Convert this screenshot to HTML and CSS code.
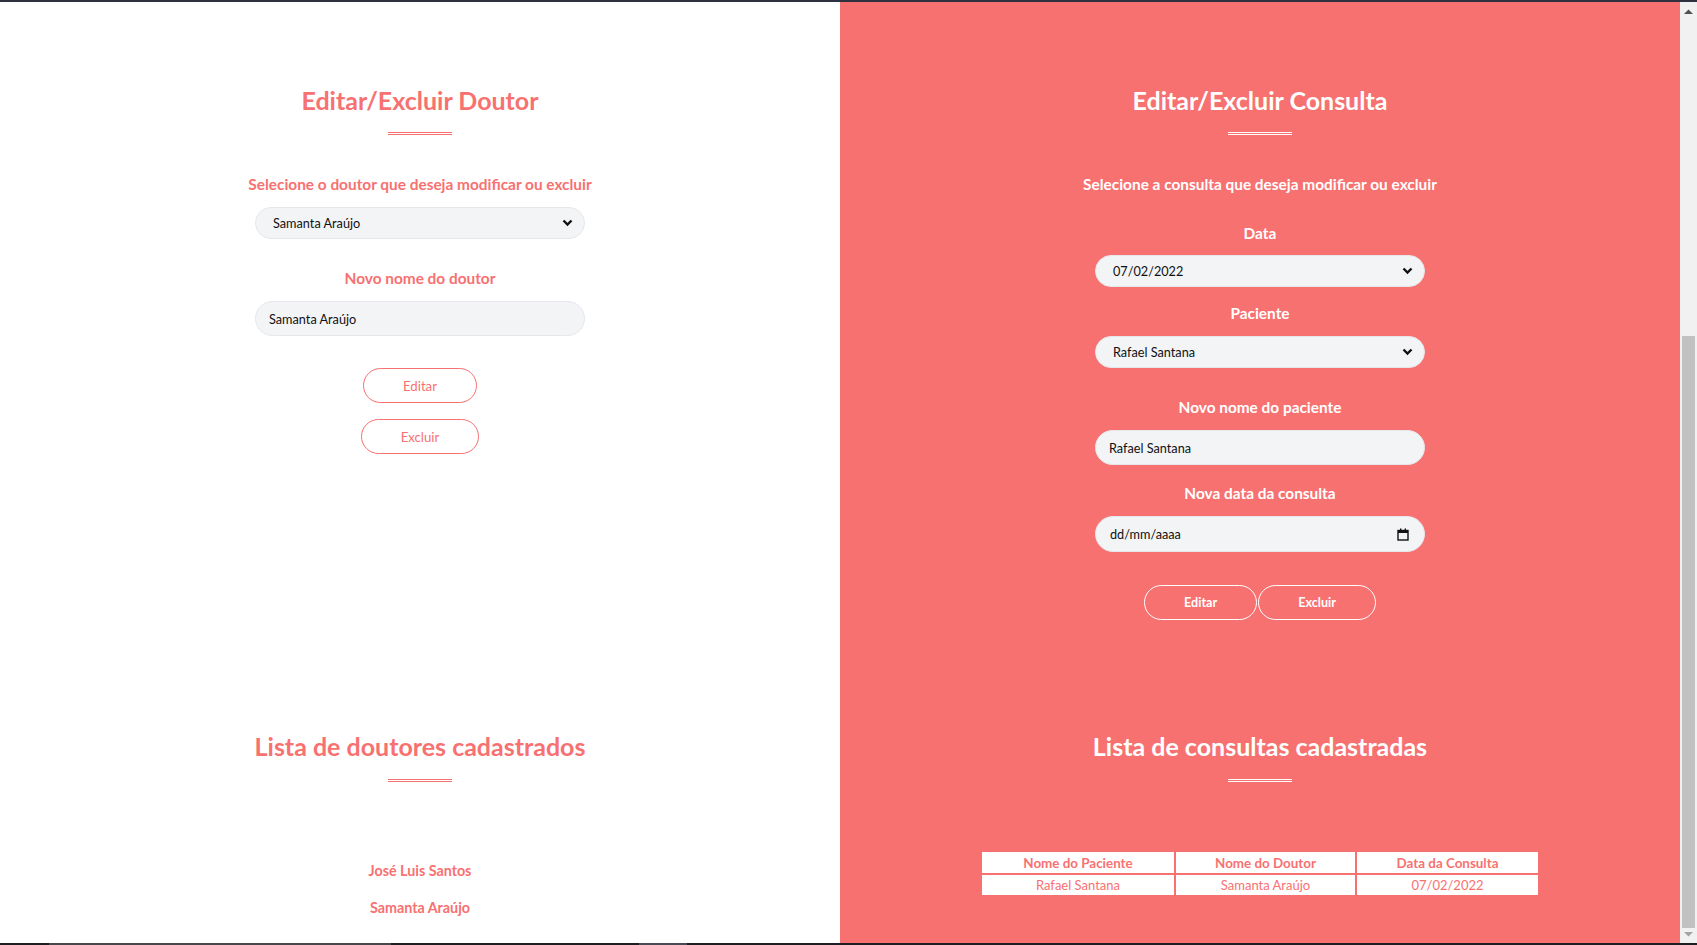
FILE: index.html
```html
<!DOCTYPE html>
<html lang="pt-BR">
<head>
<meta charset="utf-8">
<title>Editar/Excluir</title>
<link rel="stylesheet" href="styles.css">
</head>
<body>
<div class="topline"></div>
<div class="frame">
  <main class="page">
    <section class="col col-left">
      <div class="form-block">
        <h2 class="title">Editar/Excluir Doutor</h2>
        <div class="bar"></div>
        <p class="label lead">Selecione o doutor que deseja modificar ou excluir</p>
        <div class="select sel-doc"><span>Samanta Araújo</span>
          <svg class="chev" width="11" height="8" viewBox="0 0 11 8"><path d="M1.5 1.5 L5.5 5.5 L9.5 1.5" fill="none" stroke="#111" stroke-width="2.4"/></svg>
        </div>
        <p class="label l-doc">Novo nome do doutor</p>
        <input class="field" type="text" value="Samanta Araújo">
        <div class="btn-stack">
          <button class="btn">Editar</button>
          <button class="btn btn-2">Excluir</button>
        </div>
      </div>
      <div class="list-block">
        <h2 class="title">Lista de doutores cadastrados</h2>
        <div class="bar"></div>
        <ul class="names">
          <li>José Luis Santos</li>
          <li>Samanta Araújo</li>
        </ul>
      </div>
    </section>
    <section class="col col-right">
      <div class="form-block">
        <h2 class="title">Editar/Excluir Consulta</h2>
        <div class="bar"></div>
        <p class="label lead">Selecione a consulta que deseja modificar ou excluir</p>
        <p class="label l-data">Data</p>
        <div class="select s-data"><span>07/02/2022</span>
          <svg class="chev" width="11" height="8" viewBox="0 0 11 8"><path d="M1.5 1.5 L5.5 5.5 L9.5 1.5" fill="none" stroke="#111" stroke-width="2.4"/></svg>
        </div>
        <p class="label l-pac">Paciente</p>
        <div class="select s-pac"><span>Rafael Santana</span>
          <svg class="chev" width="11" height="8" viewBox="0 0 11 8"><path d="M1.5 1.5 L5.5 5.5 L9.5 1.5" fill="none" stroke="#111" stroke-width="2.4"/></svg>
        </div>
        <p class="label l-nome">Novo nome do paciente</p>
        <input class="field f-nome" type="text" value="Rafael Santana">
        <p class="label l-nova">Nova data da consulta</p>
        <div class="field date-field"><span>dd/mm/aaaa</span>
          <svg class="cal" width="12" height="13" viewBox="0 0 12 13"><rect x="1" y="2.5" width="10" height="9.5" fill="none" stroke="#111" stroke-width="1.4"/><rect x="1" y="2.5" width="10" height="2.5" fill="#111"/><rect x="3" y="0.5" width="1.4" height="2.5" fill="#111"/><rect x="7.6" y="0.5" width="1.4" height="2.5" fill="#111"/></svg>
        </div>
        <div class="btn-row">
          <button class="btn btn-light">Editar</button>
          <button class="btn btn-light">Excluir</button>
        </div>
      </div>
      <div class="list-block">
        <h2 class="title">Lista de consultas cadastradas</h2>
        <div class="bar"></div>
        <table class="appts">
          <thead>
            <tr><th class="c1">Nome do Paciente</th><th class="c2">Nome do Doutor</th><th class="c3">Data da Consulta</th></tr>
          </thead>
          <tbody>
            <tr><td>Rafael Santana</td><td>Samanta Araújo</td><td>07/02/2022</td></tr>
          </tbody>
        </table>
      </div>
    </section>
  </main>
  <div class="scrollbar">
    <svg class="sb-up" width="9" height="5" viewBox="0 0 9 5"><path d="M0 5 L4.5 0.5 L9 5 Z" fill="#505050"/></svg>
    <div class="sb-track"><div class="sb-thumb"></div></div>
    <svg class="sb-down" width="9" height="5" viewBox="0 0 9 5"><path d="M0 0 L4.5 4.5 L9 0 Z" fill="#a3a3a3"/></svg>
  </div>
</div>
<div class="bottomline"><span class="seg seg-a"></span><span class="seg seg-b"></span></div>
</body>
</html>
```
FILE: styles.css
```css
* { box-sizing: border-box; margin: 0; padding: 0; }
html, body { height: 100%; overflow: hidden; }
body {
  font-family: Lato, "Open Sans", sans-serif;
  background: #fff;
  display: flex;
  flex-direction: column;
  height: 945px;
}
.topline { height: 2px; background: #2f3140; flex: none; }
.bottomline { height: 2px; background: #1d1d22; flex: none; display: flex; }
.seg { display: block; height: 2px; }
.seg-a { margin-left: 49px; width: 342px; background: #48484c; }
.seg-b { margin-left: 248px; width: 48px; background: #4a4a55; }

.frame { flex: 1; display: flex; min-height: 0; }
.page { flex: 1; display: grid; grid-template-columns: 1fr 1fr; }
.col { display: flex; flex-direction: column; align-items: center; min-height: 0; overflow: hidden; }
.col-left { color: #f87171; }
.col-right { background: #f87171; color: #fff; }

.form-block { height: 727px; padding-top: 81px; display: flex; flex-direction: column; align-items: center; flex: none; width: 100%; }
.list-block { display: flex; flex-direction: column; align-items: center; width: 100%; }

.title { font-size: 25px; line-height: 34px; font-weight: 700; }
.bar { width: 64px; height: 3px; border-top: 1px solid currentColor; border-bottom: 1px solid currentColor; margin-top: 15px; }
.list-block .bar { margin-top: 16px; }

.label { font-size: 15.4px; line-height: 20px; font-weight: 700; }
.lead { margin-top: 39px; }
.l-doc { margin-top: 29px; }
.l-data { margin-top: 29px; }
.l-pac { margin-top: 16px; }
.l-nome { margin-top: 29px; }
.l-nova { margin-top: 18px; }

.select, .field {
  width: 330px;
  background: #f3f4f6;
  border: 1px solid #e5e7eb;
  border-radius: 999px;
  color: #111;
  font-family: inherit;
  font-size: 12.7px;
  display: flex;
  align-items: center;
  justify-content: space-between;
}
.select { height: 32px; margin-top: 13px; padding: 0 11px 0 17px; }
.s-data { margin-top: 12px; }
.field { height: 35px; margin-top: 13px; padding: 0 14px 0 13px; outline: none; }
.date-field { height: 36px; padding: 0 15px 0 14px; }
.chev { display: block; }
.cal { display: block; }

.btn {
  font-family: inherit;
  font-size: 13.2px;
  height: 35px;
  padding: 0 39px;
  border-radius: 999px;
  background: transparent;
  border: 1px solid #f87171;
  color: #f87171;
  cursor: pointer;
}
.btn-stack { display: flex; flex-direction: column; align-items: center; gap: 16px; margin-top: 32px; }
.btn-row { display: flex; gap: 1px; margin-top: 33px; }
.btn-light { border-color: #fff; color: #fff; font-weight: 700; font-size: 12.6px; }

.names { list-style: none; margin-top: 79px; display: flex; flex-direction: column; gap: 17px; text-align: center; font-size: 14.3px; line-height: 20px; font-weight: 700; }

.appts { margin-top: 68px; border-spacing: 2px; font-size: 13px; color: #f87171; }
.appts th, .appts td { background: #fff; text-align: center; padding: 0; }
.appts th { height: 21px; font-weight: 700; font-size: 13.4px; }
.appts td { height: 20px; font-weight: 400; }
.c1 { width: 192px; }
.c2 { width: 179px; }
.c3 { width: 181px; }

.scrollbar { width: 17px; flex: none; background: #f1f1f1; display: flex; flex-direction: column; align-items: center; }
.sb-up { margin-top: 7px; display: block; }
.sb-track { flex: 1; width: 100%; padding: 322px 2px 4px 2px; display: flex; }
.sb-thumb { flex: 1; background: #c1c1c1; }
.sb-down { margin-bottom: 6px; display: block; }
```
